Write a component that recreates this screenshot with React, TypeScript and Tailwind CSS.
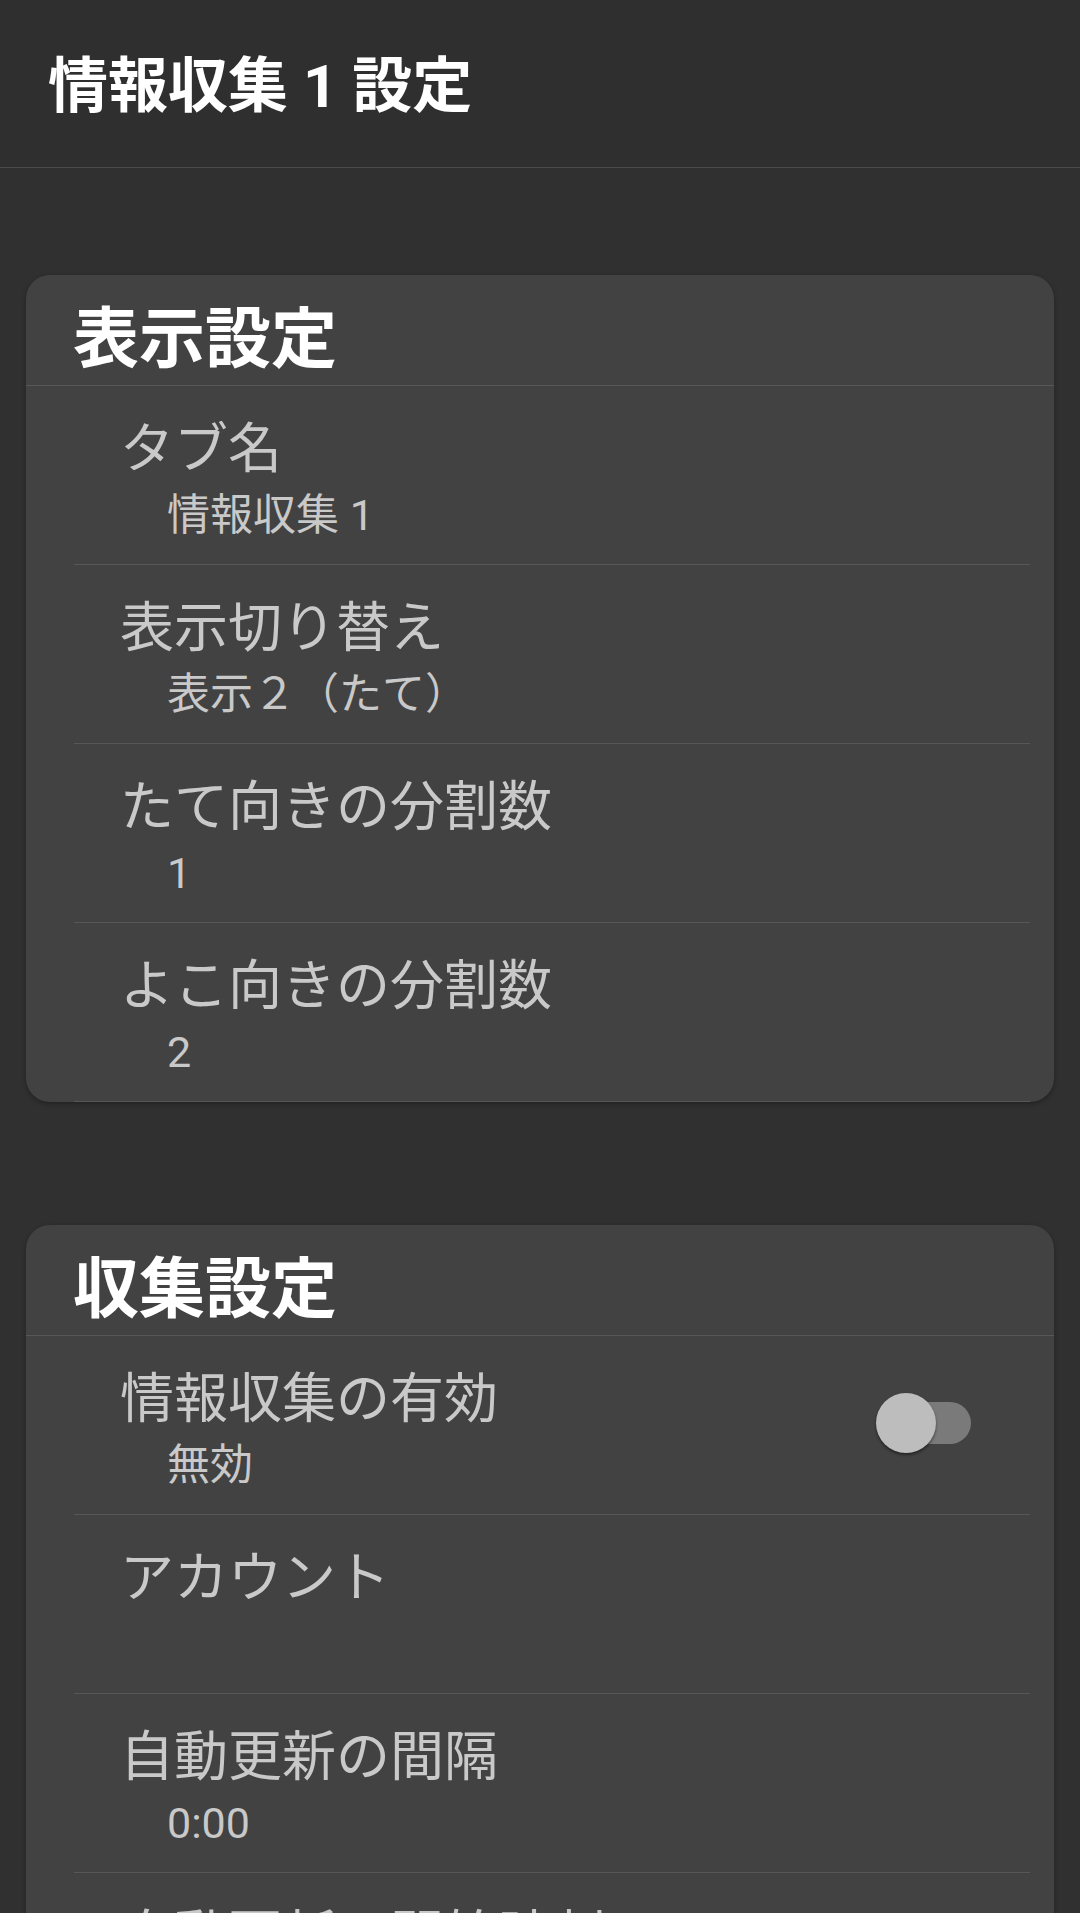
import React from 'react';

interface SettingRow {
  title: string;
  value?: string;
  toggle?: boolean;
}

interface SettingSection {
  heading: string;
  rows: SettingRow[];
}

const sections: SettingSection[] = [
  {
    heading: '表示設定',
    rows: [
      { title: 'タブ名', value: '情報収集 1' },
      { title: '表示切り替え', value: '表示２（たて）' },
      { title: 'たて向きの分割数', value: '1' },
      { title: 'よこ向きの分割数', value: '2' },
    ],
  },
  {
    heading: '収集設定',
    rows: [
      { title: '情報収集の有効', value: '無効', toggle: true },
      { title: 'アカウント', value: '' },
      { title: '自動更新の間隔', value: '0:00' },
      { title: '自動更新の開始時刻', value: '0:00' },
    ],
  },
];

function Switch() {
  return (
    <div className="relative w-[84px] h-[42px] rounded-full bg-[#7a7a7a] mr-[59px] -mt-[4px] self-center shrink-0">
      <div className="absolute -left-[11px] -top-[9px] w-[60px] h-[60px] rounded-full bg-[#bdbdbd] shadow-[0_2px_3px_rgba(0,0,0,0.45)]" />
    </div>
  );
}

function Row({ row }: { row: SettingRow }) {
  return (
    <div className="h-[179px] border-b border-[#575757] flex justify-between">
      <div className="pl-[46px] pt-[33px] flex flex-col">
        <span className="text-[54px] leading-[62px] text-[#c9c9c9]">{row.title}</span>
        <span className="ml-[47px] mt-[8px] text-[43px] leading-[52px] text-[#c9c9c9]">{row.value}</span>
      </div>
      {row.toggle && <Switch />}
    </div>
  );
}

function Card({ section }: { section: SettingSection }) {
  return (
    <section className="rounded-[24px] bg-[#424242] overflow-hidden shadow-[0_2px_5px_rgba(0,0,0,0.3)]">
      {/* Heading */}
      <div className="h-[111px] border-b border-[#575757] pl-[47px] pt-[33px]">
        <h2 className="text-[66px] leading-[64px] font-bold text-white">{section.heading}</h2>
      </div>
      {/* Rows */}
      <div className="ml-[48px] mr-[24px]">
        {section.rows.map((row) => (
          <Row key={row.title} row={row} />
        ))}
      </div>
    </section>
  );
}

export default function App() {
  return (
    <div
      className="min-h-screen bg-[#303030]"
      style={{ fontFamily: 'Roboto, "Noto Sans CJK JP", sans-serif' }}
    >
      <header className="h-[168px] bg-[#2f2f2f] border-b border-[#4a4a4a] pl-[48px] pt-[51px]">
        <h1 className="text-[60px] leading-[72px] font-bold text-white">情報収集 1 設定</h1>
      </header>

      <main className="px-[26px] pt-[107px] flex flex-col gap-[123px] pb-[40px]">
        {sections.map((s) => (
          <Card key={s.heading} section={s} />
        ))}
      </main>
    </div>
  );
}
